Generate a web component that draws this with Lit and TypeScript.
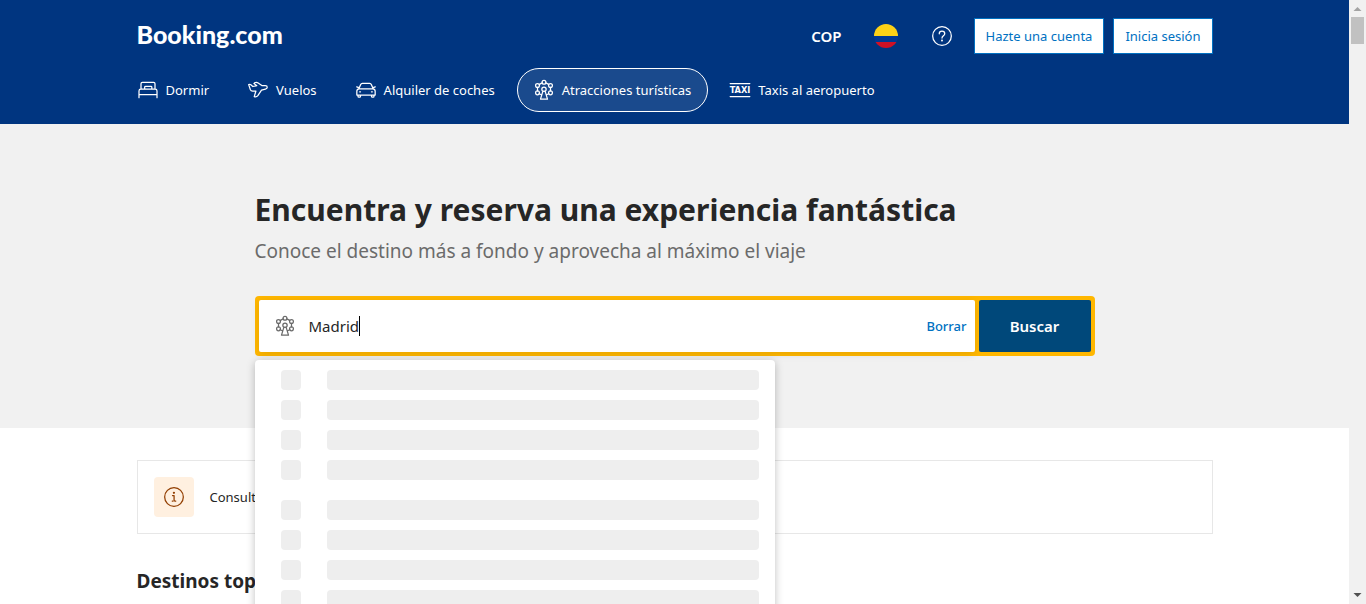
import { LitElement, html, css, svg } from "lit";
import { customElement, property, state } from "lit/decorators.js";
import { classMap } from "lit/directives/class-map.js";

const wheel = svg`
  <circle cx="12" cy="2.600" r="2.300"/><circle cx="4.200" cy="6.500" r="2.300"/><circle cx="19.800" cy="6.500" r="2.300"/>
  <circle cx="4.200" cy="15.400" r="2.300"/><circle cx="19.800" cy="15.400" r="2.300"/><circle cx="12" cy="11" r="2.600"/>
  <path d="M6.400 5.300 9.800 3.500M14.200 3.500l3.400 1.800M4.200 8.800v4.300M19.800 8.800v4.300M6.300 16.500l2.500 1.200M17.700 16.500l-2.500 1.200M10.700 13.400 7.800 23h8.400l-2.900-9.600"/>`;

const icons: Record<string, unknown> = {
  bed: svg`<path d="M3.600 11V4.400c0-1 .7-1.700 1.700-1.700h13.400c1 0 1.700.7 1.700 1.700V11M8 11V8.600c0-.6.400-1 1-1h6.600c.6 0 1 .4 1 1V11M3.400 11h17.200c1.200 0 2.200 1 2.200 2.200v8M3.400 11c-1.200 0-2.200 1-2.200 2.200v8M1.200 17.600h21.600"/>`,
  plane: svg`<path d="M.8 5.600c1-.4 1.900-.4 2.600.1l2.400 2.100 4.800-.9-3.400-2.800c1.700-1.500 3.400-1.500 5-.5l4.400 3.100h4.200c1.400 0 2.300.9 2.300 2s-.9 1.900-2.200 2.200l-4.700 1.200-4.400 6.700c-1 1.300-2.500 1.700-4.300 1.200l2-6.800-4 .1c-1.200 0-2.100-.5-2.600-1.600z"/>`,
  car: svg`<path d="M3.400 10.600 5.600 5.400c.4-1 1-1.500 2-1.500h8.800c1 0 1.600.5 2 1.500l2.200 5.200M1 18v-4.600c0-1.700 1.200-2.800 2.900-2.800h16.200c1.700 0 2.900 1.100 2.900 2.800V18zM2.400 18v1.500c0 .7.400 1.100 1.100 1.100h.8c.7 0 1.100-.4 1.100-1.100V18M18.600 18v1.500c0 .7.400 1.100 1.100 1.100h.8c.7 0 1.100-.4 1.100-1.100V18M.9 8.200l2.500 1M23.100 8.200l-2.500 1M4.400 14.200h1M18.600 14.200h1"/>`,
  wheel,
  taxi: svg`<path d="M.2 4.200h23.600M.2 19.800h23.600"/><text class="taxi" x="12" y="16" text-anchor="middle">TAXI</text>`,
  help: svg`<circle cx="12" cy="12" r="11.200"/><path d="M8.700 9.400c0-1.900 1.400-3.200 3.300-3.200s3.300 1.300 3.300 3.100c0 2.500-3.300 2.500-3.300 5.200"/><circle cx="12" cy="17.300" r=".5"/>`,
  info: svg`<circle cx="12" cy="12" r="11.200"/><path d="M10.200 10.200h1.900v5.400c0 .9.300 1.300 1.100 1.300h.9M9.900 16.900h1"/><circle cx="11.900" cy="6.900" r=".6"/>`,
};

@customElement("ui-icon")
export class UiIcon extends LitElement {
  @property() name = "wheel";
  static styles = css`
    :host { display: block; width: 20px; height: 20px; flex: none; }
    .glyph {
      display: block; width: 100%; height: 100%; overflow: visible;
      fill: none; stroke: currentColor; stroke-width: 1.5;
      stroke-linecap: round; stroke-linejoin: round;
    }
    .taxi { font: bold 11px "Liberation Sans Narrow", "DejaVu Sans Condensed", sans-serif; fill: currentColor; stroke: none; }
  `;
  render() {
    return html`<svg class="glyph" viewBox="0 0 24 24" aria-hidden="true">${icons[this.name]}</svg>`;
  }
}

@customElement("site-header")
export class SiteHeader extends LitElement {
  static styles = css`
    :host { display: block; background: #003580; color: #fff; }
    .inner { box-sizing: border-box; max-width: 1108px; margin: 0 auto; padding: 12px 16px; }
    .bar { display: flex; align-items: center; justify-content: space-between; height: 48px; }
    .logo { padding-bottom: 4px; color: #fff; text-decoration: none; font: 900 25px/32px Lato, sans-serif; }
    .tools { display: flex; align-items: center; }
    .tool {
      display: flex; align-items: center; justify-content: center; background: none; border: 0; color: inherit;
      height: 48px; padding: 0 16px; font: 600 15px/20px "Noto Sans", sans-serif;
    }
    .flag { display: block; width: 24px; height: 24px; }
    .help { padding: 0 22px 0 18px; }
    .actions { display: flex; gap: 9px; }
    .action {
      box-sizing: border-box; height: 36px; padding: 7px 11px; border: 1px solid #0071c2; background: #fff; color: #0071c2;
      text-decoration: none; font-size: 13px; line-height: 20px;
    }
    .nav { display: flex; gap: 5px; margin: 8px 0 0 -16px; }
    .item {
      display: flex; align-items: center; gap: 8px; box-sizing: border-box; height: 44px; padding: 0 16px;
      border: 1px solid transparent; border-radius: 22px; color: #fff; text-decoration: none;
      font-size: 13px; line-height: 20px; white-space: nowrap;
    }
    .current { border-color: #fff; background: #1a4a8d; }
  `;
  private items = [
    ["bed", "Dormir"],
    ["plane", "Vuelos"],
    ["car", "Alquiler de coches"],
    ["wheel", "Atracciones turísticas"],
    ["taxi", "Taxis al aeropuerto"],
  ];
  render() {
    return html`<header class="inner">
      <div class="bar">
        <a class="logo" href="#">Booking.com</a>
        <div class="tools">
          <button class="tool">COP</button>
          <button class="tool" aria-label="Español">
            <svg class="flag" viewBox="0 0 24 24">
              <clipPath id="round"><circle cx="12" cy="12" r="12" /></clipPath>
              <g clip-path="url(#round)">
                <path fill="#fcd116" d="M0 0h24v12H0z" />
                <path fill="#003893" d="M0 12h24v6H0z" />
                <path fill="#ce1126" d="M0 18h24v6H0z" />
              </g>
            </svg>
          </button>
          <button class="tool help" aria-label="Ayuda"><ui-icon name="help"></ui-icon></button>
          <div class="actions">
            <a class="action" href="#">Hazte una cuenta</a>
            <a class="action" href="#">Inicia sesión</a>
          </div>
        </div>
      </div>
      <nav class="nav">
        ${this.items.map(
          ([icon, label]) => html`<a class=${classMap({ item: true, current: icon === "wheel" })} href="#">
            <ui-icon name=${icon}></ui-icon>${label}</a>`
        )}
      </nav>
    </header>`;
  }
}

@customElement("search-box")
export class SearchBox extends LitElement {
  @state() private value = "Madrid";
  static styles = css`
    :host { display: block; position: relative; }
    .form { display: flex; gap: 4px; padding: 4px; background: #ffb700; border-radius: 4px; }
    .field {
      flex: 1; display: flex; align-items: center; height: 52px; padding: 0 8px 0 16px; background: #fff;
      border-radius: 2px; color: #6b6b6b; box-shadow: 0 2px 8px rgba(0, 0, 0, 0.1); cursor: text;
    }
    .input {
      field-sizing: content; min-width: 0; border: 0; outline: 0; padding: 0; margin-left: 14px; background: none;
      color: #262626; caret-color: transparent; font: 15px/24px "Noto Sans", sans-serif;
    }
    .caret { width: 1px; height: 20px; background: #000; }
    .clear {
      margin-left: auto; border: 0; background: none; padding: 0; color: #0071c2;
      font: 500 13px/20px "Noto Sans", sans-serif;
    }
    .submit {
      width: 112px; border: 0; border-radius: 2px; background: #00487a; color: #fff;
      font: 600 15px/24px "Noto Sans", sans-serif;
    }
    .list {
      position: absolute; top: 100%; left: 0; box-sizing: border-box; width: 520px; max-width: 100%; margin-top: 4px;
      padding: 10px 16px 20px 26px; display: grid; gap: 20px; background: #fff; border-radius: 4px;
      box-shadow: 0 2px 8px rgba(0, 0, 0, 0.25); z-index: 2;
    }
    .group { display: grid; gap: 10px; }
    .row { display: flex; gap: 26px; height: 20px; }
    .thumb { width: 20px; background: #eee; border-radius: 4px; }
    .line { flex: 1; background: #eee; border-radius: 4px; }
  `;
  private clear() {
    this.value = "";
  }
  private onInput(e: Event) {
    this.value = (e.target as HTMLInputElement).value;
  }
  render() {
    return html`<form class="form" @submit=${(e: Event) => e.preventDefault()}>
        <div class="field">
          <label for="place"><ui-icon name="wheel"></ui-icon></label>
          <input class="input" id="place" aria-label="Destino" .value=${this.value} @input=${this.onInput} />
          <span class="caret"></span>
          <button class="clear" type="button" @click=${this.clear}>Borrar</button>
        </div>
        <button class="submit">Buscar</button>
      </form>
      <div class="list" aria-busy="true">
        ${[0, 1].map(
          () => html`<div class="group">
            ${[0, 1, 2, 3].map(() => html`<div class="row"><span class="thumb"></span><span class="line"></span></div>`)}
          </div>`
        )}
      </div>`;
  }
}

@customElement("app-root")
export class AppRoot extends LitElement {
  static styles = css`
    :host {
      display: flex; height: 100vh; overflow: hidden; background: #fff; color: #262626;
      font-family: "Noto Sans", "Open Sans", sans-serif;
    }
    .page { flex: 1; min-width: 0; overflow: hidden; }
    .hero { background: #f1f1f1; padding: 66px 16px 72px; }
    .center { max-width: 840px; margin: 0 auto; }
    .title { margin: 0; font-size: 30px; line-height: 40px; font-weight: 700; }
    .lead { margin: 6px 0 30px; font-size: 19px; line-height: 30px; color: #6b6b6b; }
    .content { max-width: 1076px; margin: 0 auto; padding: 32px 16px; }
    .notice {
      display: flex; align-items: center; gap: 16px; padding: 16px; border: 1px solid #e7e7e7;
      font-size: 13px; line-height: 20px;
    }
    .badge {
      display: grid; place-items: center; width: 40px; height: 40px; background: #fff0e0; color: #923e01; border-radius: 4px;
    }
    .subtitle { margin: 32px 0 0; font-size: 19px; line-height: 30px; font-weight: 700; }
    .scroll {
      width: 17px; display: flex; flex-direction: column; align-items: center; background: #f1f1f1;
    }
    .arrow { display: block; width: 17px; height: 17px; fill: #a3a3a3; }
    .down { margin-top: auto; fill: #505050; }
    .thumb { width: 13px; height: 27px; background: #c1c1c1; }
  `;
  render() {
    return html`<div class="page">
        <site-header></site-header>
        <section class="hero">
          <div class="center">
            <h1 class="title">Encuentra y reserva una experiencia fantástica</h1>
            <p class="lead">Conoce el destino más a fondo y aprovecha al máximo el viaje</p>
            <search-box></search-box>
          </div>
        </section>
        <main class="content">
          <div class="notice">
            <span class="badge"><ui-icon name="info"></ui-icon></span>
            <span>Consulta</span>
          </div>
          <h2 class="subtitle">Destinos top</h2>
        </main>
      </div>
      <div class="scroll" aria-hidden="true">
        <svg class="arrow" viewBox="0 0 17 17"><path d="M4.500 11 8.500 7l4 4z" /></svg>
        <div class="thumb"></div>
        <svg class="arrow down" viewBox="0 0 17 17"><path d="M4.500 6h8l-4 4z" /></svg>
      </div>`;
  }
}
